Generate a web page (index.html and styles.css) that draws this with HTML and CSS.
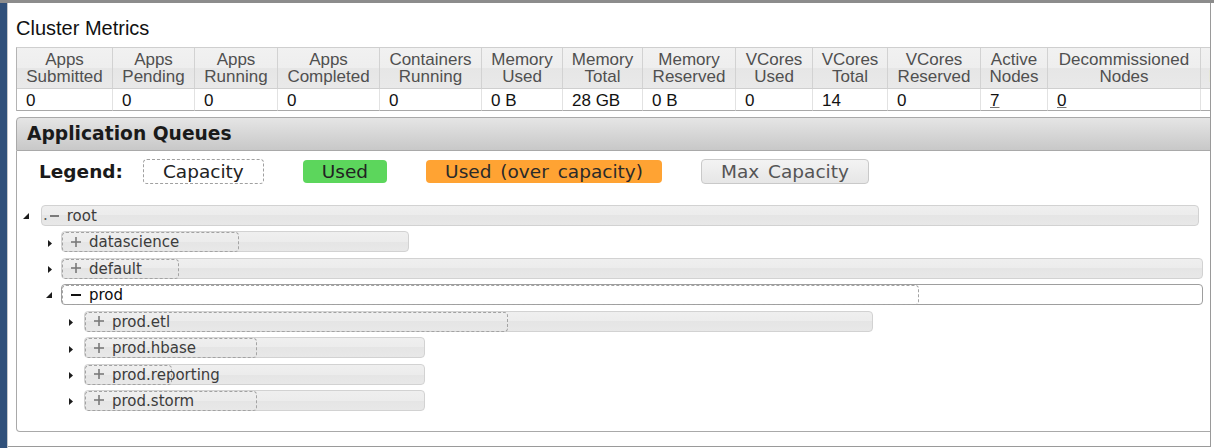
FILE: index.html
```html
<!DOCTYPE html>
<html>
<head>
<meta charset="utf-8">
<title>Scheduler</title>
<link rel="stylesheet" href="styles.css">
</head>
<body>
<div class="topbar"></div>
<div class="layout">
  <div class="nav"></div>
  <div class="content">
    <h3 class="title">Cluster Metrics</h3>
    <table class="metrics">
      <thead>
        <tr>
          <th>Apps<br>Submitted</th>
          <th>Apps<br>Pending</th>
          <th>Apps<br>Running</th>
          <th>Apps<br>Completed</th>
          <th>Containers<br>Running</th>
          <th>Memory<br>Used</th>
          <th>Memory<br>Total</th>
          <th>Memory<br>Reserved</th>
          <th>VCores<br>Used</th>
          <th>VCores<br>Total</th>
          <th>VCores<br>Reserved</th>
          <th>Active<br>Nodes</th>
          <th>Decommissioned<br>Nodes</th>
          <th>Lost<br>Nodes</th>
          <th>Unhealthy<br>Nodes</th>
        </tr>
      </thead>
      <tbody>
        <tr>
          <td>0</td>
          <td>0</td>
          <td>0</td>
          <td>0</td>
          <td>0</td>
          <td>0 B</td>
          <td>28 GB</td>
          <td>0 B</td>
          <td>0</td>
          <td>14</td>
          <td>0</td>
          <td><a class="lnk" href="#">7</a></td>
          <td><a class="lnk" href="#">0</a></td>
          <td><a class="lnk" href="#">0</a></td>
          <td><a class="lnk" href="#">0</a></td>
        </tr>
      </tbody>
    </table>

    <div class="panel">
      <div class="panel-head">Application Queues</div>
      <div class="panel-body">
        <div class="legend">
          <span class="legend-label">Legend:</span>
          <span class="qlegend q-capacity">Capacity</span>
          <span class="qlegend q-used">Used</span>
          <span class="qlegend q-over">Used (over capacity)</span>
          <span class="qlegend q-max">Max Capacity</span>
        </div>

        <div class="tree">
          <div class="row lvl0">
            <svg class="arrow open" width="6" height="6" viewBox="0 0 6 6"><polygon points="6,0 6,6 0,6"/></svg>
            <div class="bar" style="width:1158px">
              <span class="qlabel root-label"><span class="dot">.</span><svg class="ico" width="9" height="10" viewBox="0 0 9 10"><rect x="0" y="4" width="9" height="2" fill="#7a7a7a"/></svg><span class="qname">root</span></span>
            </div>
          </div>

          <div class="row lvl1">
            <svg class="arrow closed" width="6" height="7" viewBox="0 0 6 7"><polygon points="2,0 6,3.5 2,7"/></svg>
            <div class="bar" style="width:348px">
              <span class="cap" style="width:177px"></span>
              <span class="qlabel"><svg class="ico" width="10" height="10" viewBox="0 0 10 10"><rect x="4.2" y="0" width="1.6" height="10" fill="#7a7a7a"/><rect x="0" y="4.2" width="10" height="1.6" fill="#7a7a7a"/></svg><span class="qname">datascience</span></span>
            </div>
          </div>

          <div class="row lvl1">
            <svg class="arrow closed" width="6" height="7" viewBox="0 0 6 7"><polygon points="2,0 6,3.5 2,7"/></svg>
            <div class="bar" style="width:1142px">
              <span class="cap" style="width:117px"></span>
              <span class="qlabel"><svg class="ico" width="10" height="10" viewBox="0 0 10 10"><rect x="4.2" y="0" width="1.6" height="10" fill="#7a7a7a"/><rect x="0" y="4.2" width="10" height="1.6" fill="#7a7a7a"/></svg><span class="qname">default</span></span>
            </div>
          </div>

          <div class="row lvl1">
            <svg class="arrow open" width="6" height="6" viewBox="0 0 6 6"><polygon points="6,0 6,6 0,6"/></svg>
            <div class="bar active" style="width:1142px">
              <span class="cap" style="width:857px"></span>
              <span class="qlabel"><svg class="ico" width="10" height="10" viewBox="0 0 10 10"><rect x="0" y="4" width="10" height="2" fill="#111"/></svg><span class="qname">prod</span></span>
            </div>
          </div>

          <div class="row lvl2">
            <svg class="arrow closed" width="6" height="7" viewBox="0 0 6 7"><polygon points="2,0 6,3.5 2,7"/></svg>
            <div class="bar" style="width:789px">
              <span class="cap" style="width:423px"></span>
              <span class="qlabel"><svg class="ico" width="10" height="10" viewBox="0 0 10 10"><rect x="4.2" y="0" width="1.6" height="10" fill="#7a7a7a"/><rect x="0" y="4.2" width="10" height="1.6" fill="#7a7a7a"/></svg><span class="qname">prod.etl</span></span>
            </div>
          </div>

          <div class="row lvl2">
            <svg class="arrow closed" width="6" height="7" viewBox="0 0 6 7"><polygon points="2,0 6,3.5 2,7"/></svg>
            <div class="bar" style="width:341px">
              <span class="cap" style="width:172px"></span>
              <span class="qlabel"><svg class="ico" width="10" height="10" viewBox="0 0 10 10"><rect x="4.2" y="0" width="1.6" height="10" fill="#7a7a7a"/><rect x="0" y="4.2" width="10" height="1.6" fill="#7a7a7a"/></svg><span class="qname">prod.hbase</span></span>
            </div>
          </div>

          <div class="row lvl2">
            <svg class="arrow closed" width="6" height="7" viewBox="0 0 6 7"><polygon points="2,0 6,3.5 2,7"/></svg>
            <div class="bar" style="width:341px">
              <span class="cap" style="width:87px"></span>
              <span class="qlabel"><svg class="ico" width="10" height="10" viewBox="0 0 10 10"><rect x="4.2" y="0" width="1.6" height="10" fill="#7a7a7a"/><rect x="0" y="4.2" width="10" height="1.6" fill="#7a7a7a"/></svg><span class="qname">prod.reporting</span></span>
            </div>
          </div>

          <div class="row lvl2">
            <svg class="arrow closed" width="6" height="7" viewBox="0 0 6 7"><polygon points="2,0 6,3.5 2,7"/></svg>
            <div class="bar" style="width:341px">
              <span class="cap" style="width:172px"></span>
              <span class="qlabel"><svg class="ico" width="10" height="10" viewBox="0 0 10 10"><rect x="4.2" y="0" width="1.6" height="10" fill="#7a7a7a"/><rect x="0" y="4.2" width="10" height="1.6" fill="#7a7a7a"/></svg><span class="qname">prod.storm</span></span>
            </div>
          </div>
        </div>
      </div>
    </div>
  </div>
</div>
</body>
</html>
```

FILE: styles.css
```css
* { box-sizing: border-box; }

html, body {
  margin: 0;
  padding: 0;
  background: #fff;
  width: 1214px;
  height: 448px;
  overflow: hidden;
}

.topbar {
  height: 3px;
  background: #8c8c8c;
}

.layout {
  display: flex;
  height: 445px;
}

.nav {
  width: 8px;
  flex: none;
  background: #30507a;
  border-right: 1px solid #c4c8cc;
}

.content {
  width: 1203px;
  height: 444px;
  flex: none;
  overflow: hidden;
  border-right: 1px solid #9a9a9a;
  border-bottom: 1px solid #9a9a9a;
  padding: 15px 0 0 8px;
  font-family: "Liberation Sans", Arial, Helvetica, sans-serif;
}

.title {
  margin: 0;
  font-size: 20px;
  line-height: 21px;
  font-weight: normal;
  color: #111;
}

/* ---------- metrics table ---------- */
.metrics {
  margin-top: 8px;
  border-collapse: separate;
  border-spacing: 0;
  table-layout: fixed;
  width: 1349px;
  border-left: 1px solid #b4b4b4;
  border-top: 1px solid #cfcfcf;
  font-size: 17px;
}

.metrics th {
  font-weight: normal;
  color: #505050;
  line-height: 16.5px;
  padding: 4px 8px 3px;
  text-align: center;
  white-space: nowrap;
  background: linear-gradient(#f1f1f1 0, #eeeeee 50%, #e6e6e6 50%, #e9e9e9 100%);
  border-right: 1px solid #d2d2d2;
  border-bottom: 1px solid #cfcfcf;
  overflow: hidden;
}

.metrics td {
  color: #111;
  line-height: 19px;
  padding: 2px 9px 0;
  text-align: left;
  white-space: nowrap;
  border-right: 1px solid #e2e2e2;
  border-bottom: 1px solid #a8a8a8;
}

.metrics th:nth-child(1) { width: 96px; }
.metrics th:nth-child(2) { width: 82px; }
.metrics th:nth-child(3) { width: 83px; }
.metrics th:nth-child(4) { width: 102px; }
.metrics th:nth-child(5) { width: 102px; }
.metrics th:nth-child(6) { width: 81px; }
.metrics th:nth-child(7) { width: 80px; }
.metrics th:nth-child(8) { width: 93px; }
.metrics th:nth-child(9) { width: 77px; }
.metrics th:nth-child(10) { width: 75px; }
.metrics th:nth-child(11) { width: 93px; }
.metrics th:nth-child(12) { width: 67px; }
.metrics th:nth-child(13) { width: 153px; }
.metrics th:nth-child(14) { width: 64px; }
.metrics th:nth-child(15) { width: 100px; }

.lnk {
  color: #111;
  text-decoration: underline;
  text-decoration-color: #777;
}

/* ---------- panel ---------- */
.panel {
  margin-top: 6px;
  width: 1215px;
  font-family: "DejaVu Sans", Verdana, sans-serif;
}

.panel-head {
  height: 34px;
  border: 1px solid #a9a9a9;
  border-radius: 4px 4px 0 0;
  background: linear-gradient(#e5e5e5, #c8c8c8);
  padding-left: 10px;
  font-size: 18.7px;
  line-height: 32px;
  font-weight: bold;
  color: #1a1a1a;
}

.panel-body {
  border: 1px solid #a9a9a9;
  border-top: none;
  border-radius: 0 0 4px 4px;
  padding: 8px 0 20px;
}

/* ---------- legend ---------- */
.legend {
  display: flex;
  align-items: center;
  height: 25px;
  padding-left: 22px;
  font-size: 18.5px;
}

.legend-label {
  font-weight: bold;
  color: #1a1a1a;
  margin-right: 20px;
}

.qlegend {
  height: 25px;
  line-height: 23px;
  padding: 0 19px;
  border-radius: 4px;
  border: 1px solid transparent;
  margin-right: 39px;
  color: #222;
  white-space: nowrap;
  word-spacing: 3px;
}

.q-capacity {
  border: 1px dashed #a0a0a0;
}

.q-used {
  height: 23px;
  line-height: 23px;
  border: none;
  background: #5cd65c;
}

.q-over {
  height: 23px;
  line-height: 23px;
  border: none;
  background: #ffa333;
  color: #2a2a2a;
}

.q-max {
  border: 1px solid #c9c9c9;
  background: linear-gradient(#f3f3f3, #e6e6e6);
  color: #555;
}

/* ---------- tree ---------- */
.tree {
  margin-top: 21px;
  display: flex;
  flex-direction: column;
  gap: 5.43px;
}

.row {
  display: flex;
  align-items: center;
  height: 21px;
}

.lvl0 { padding-left: 6px; }
.lvl1 { padding-left: 29px; }
.lvl2 { padding-left: 50px; }

.arrow {
  flex: none;
  fill: #1c1c1c;
}
.arrow.closed { margin-top: 3px; }

.lvl0 .arrow { margin-right: 12px; }
.lvl1 .arrow { margin-right: 9px; }
.lvl2 .arrow { margin-right: 11px; }

.bar {
  position: relative;
  flex: none;
  height: 21px;
  border: 1px solid #d2d2d2;
  border-radius: 4px;
  background: linear-gradient(#efefef 0, #ececec 50%, #e5e5e5 50%, #e8e8e8 100%);
}

.bar.active {
  background: #fff;
  border-color: #9e9e9e;
}

.cap {
  position: absolute;
  left: 0;
  top: 0;
  bottom: -1px;
  border: 1px dashed #a3a3a3;
  border-radius: 4px;
}

.qlabel {
  position: relative;
  display: flex;
  align-items: center;
  height: 19px;
  padding-left: 9px;
  font-size: 15px;
  line-height: 21px;
  color: #3c3c3c;
  white-space: nowrap;
}

.ico {
  flex: none;
  margin-right: 8px;
}

.qname {
  padding-top: 2px;
}

.root-label {
  padding-left: 1px;
}

.dot {
  color: #555;
  margin-right: 2px;
  margin-top: -1px;
}

.active .qlabel { color: #0d0d0d; }
```
